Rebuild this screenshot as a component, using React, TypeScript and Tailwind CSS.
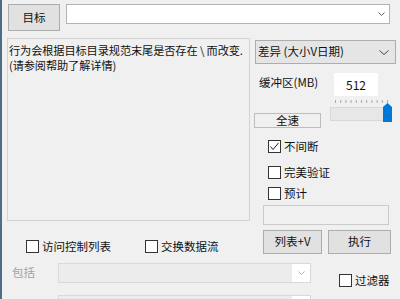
const Chevron = ({ w = 8, h = 5, color = "#5a5a5a" }: { w?: number; h?: number; color?: string }) => (
  <svg width={w} height={h} viewBox={`0 0 ${w} ${h}`}>
    <polyline points={`0.5,0.5 ${w / 2},${h - 0.5} ${w - 0.5},0.5`} fill="none" stroke={color} strokeWidth="1" />
  </svg>
);

const Check = ({ label, checked = false }: { label: string; checked?: boolean }) => (
  <div className="flex items-center h-[13px]">
    <span className="w-[13px] h-[13px] border border-[#333333] bg-white flex items-center justify-center shrink-0">
      {checked && (
        <svg width="11" height="11" viewBox="0 0 11 11">
          <polyline points="1.5,5.5 4,8.5 9.5,2" fill="none" stroke="#222222" strokeWidth="1" />
        </svg>
      )}
    </span>
    <span className="ml-[3px] leading-[13px] whitespace-nowrap">{label}</span>
  </div>
);

const Slider = () => (
  <svg width="66" height="24" viewBox="0 0 66 24" className="mt-[3px] block">
    {Array.from({ length: 11 }).map((_, i) => (
      <line key={i} x1={6.5 + i * 5.2} y1="1" x2={6.5 + i * 5.2} y2="4" stroke="#a8a8a8" strokeWidth="1" />
    ))}
    <rect x="1.5" y="8.5" width="56" height="13" fill="#e7e7e7" stroke="#d8d8d8" />
    <path d="M54 8 L58.5 4 L63 8 V23 H54 Z" fill="#0078d7" />
  </svg>
);

const DisabledCombo = () => (
  <div className="w-[253px] h-[20px] border border-[#d9d9d9] bg-[#ececec] flex justify-end">
    <div className="w-[18px] h-full bg-white flex items-center justify-center">
      <Chevron w={7} h={4} color="#b0b0b0" />
    </div>
  </div>
);

export default function App() {
  return (
    <div className="w-[400px] h-[299px] overflow-hidden bg-[#f0f0f0] border-l-2 border-[#4f6d85] text-[11.5px] text-[#111111] font-['Noto_Sans_CJK_SC',sans-serif]">
      <div className="pl-[6px] pt-[4px]">
        {/* top row */}
        <div className="flex items-start">
          <button className="w-[52px] h-[27px] bg-[#e1e1e1] border border-[#adadad] flex items-center justify-center">
            目标
          </button>
          <div className="ml-[6px] w-[324px] h-[20px] bg-white border border-[#b4b4b4] flex items-center justify-end pr-[4px]">
            <Chevron w={7} h={4} color="#606060" />
          </div>
        </div>

        {/* middle */}
        <div className="flex mt-[7px]">
          <div className="-ml-px w-[243px] flex flex-col">
            <div className="h-[183px] border border-[#d3d3d3] px-[1px] pt-[4px] leading-[15px] text-[11.2px] tracking-[-0.1px] whitespace-nowrap overflow-hidden">
              <div>行为会根据目标目录规范末尾是否存在 \ 而改变.</div>
              <div>(请参阅帮助了解详情)</div>
            </div>
            <div className="flex mt-[19px] ml-[19px]">
              <div className="w-[119px]">
                <Check label="访问控制列表" />
              </div>
              <Check label="交换数据流" />
            </div>
          </div>

          <div className="ml-[4px] w-[142px] flex flex-col">
            <div className="mt-[2px] ml-px w-[141px] h-[24px] bg-[#e5e5e5] border border-[#adadad] flex items-center justify-between pl-[2px] pr-[6px]">
              <span>差异 (大小V日期)</span>
              <Chevron w={10} h={5} color="#444444" />
            </div>

            <div className="flex mt-[9px]">
              <div className="w-[75px] flex flex-col">
                <div className="pl-[5px] pt-[2px] leading-[14px] whitespace-nowrap">缓冲区(MB)</div>
                <div className="mt-[24px] w-[67px] h-[15px] border border-[#bdbdbd] flex items-center justify-center leading-[13px]">
                  全速
                </div>
              </div>
              <div className="flex flex-col">
                <div className="ml-[5px] w-[44px] h-[23px] bg-white flex items-center justify-center text-[12px]">512</div>
                <Slider />
              </div>
            </div>

            <div className="pl-[14px] mt-[12px]">
              <Check label="不间断" checked />
            </div>
            <div className="pl-[14px] mt-[13px]">
              <Check label="完美验证" />
            </div>
            <div className="pl-[14px] mt-[8px]">
              <Check label="预计" />
            </div>

            <div className="mt-[5px] ml-[9px] w-[126px] h-[20px] border border-[#cbcbcb]" />

            <div className="mt-[5px] ml-[9px] flex">
              <button className="w-[59px] h-[24px] bg-[#e1e1e1] border border-[#adadad] flex items-center justify-center">
                列表+V
              </button>
              <button className="ml-[6px] w-[63px] h-[24px] bg-[#e1e1e1] border border-[#adadad] flex items-center justify-center">
                执行
              </button>
            </div>
          </div>
        </div>

        {/* filters */}
        <div className="flex mt-[9px] items-start">
          <div className="ml-[4px] w-[46px] h-[20px] flex items-center text-[#a3a3a3]">包括</div>
          <DisabledCombo />
          <div className="ml-[28px] mt-[11px]">
            <Check label="过滤器" />
          </div>
        </div>
        <div className="flex mt-[8px] items-start">
          <div className="ml-[4px] w-[46px] h-[20px] flex items-center text-[#a3a3a3]">排除</div>
          <DisabledCombo />
        </div>
      </div>
    </div>
  );
}
